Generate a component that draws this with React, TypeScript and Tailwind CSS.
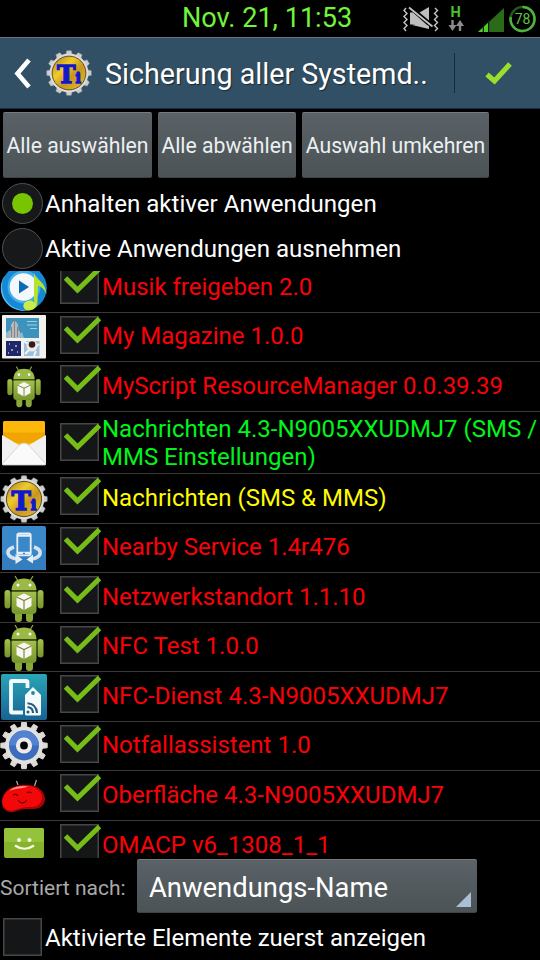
import React, { useState } from 'react'
import clsx from 'clsx'

function gearPath(teeth: number, outer: number, inner: number) {
  const pts: string[] = []
  const step = (Math.PI * 2) / teeth
  for (let i = 0; i < teeth; i++) {
    const a = i * step - Math.PI / 2
    const corners = [
      [-0.3, inner],
      [-0.19, outer],
      [0.19, outer],
      [0.3, inner],
    ]
    corners.forEach(([f, r]) => {
      pts.push(`${(24 + Math.cos(a + f * step) * r).toFixed(2)},${(24 + Math.sin(a + f * step) * r).toFixed(2)}`)
    })
  }
  return pts.join(' ')
}

function TitaniumIcon({ className }: { className?: string }) {
  return (
    <svg viewBox="0 0 48 48" className={clsx('shrink-0', className)}>
      <defs>
        <linearGradient id="gold" x1="0" y1="0" x2="1" y2="1">
          <stop offset="0" stopColor="#a97c14" />
          <stop offset="0.35" stopColor="#f0cb2c" />
          <stop offset="0.6" stopColor="#c9951c" />
          <stop offset="1" stopColor="#e8c53a" />
        </linearGradient>
      </defs>
      <polygon points={gearPath(12, 23.3, 20)} fill="#cdcdcd" stroke="#a8a8a8" strokeWidth="0.6" />
      <circle cx="24" cy="24" r="20" fill="#dcdcdc" />
      <circle cx="24" cy="24" r="17.6" fill="url(#gold)" stroke="#5b4a1c" strokeWidth="1" />
      <text
        x="11.5"
        y="34.500"
        fontSize="26"
        textLength="25"
        lengthAdjust="spacingAndGlyphs"
        fill="#1018cc"
        stroke="#1018cc"
        strokeWidth="1.4"
        fontWeight="bold"
        fontFamily="DejaVu Serif, serif"
      >
        T<tspan fontSize="15">i</tspan>
      </text>
    </svg>
  )
}

function MusicIcon() {
  return (
    <svg viewBox="0 0 48 48" className="size-12">
      <circle cx="24" cy="24" r="22.8" fill="#1689d6" />
      <path d="M5 11A22.8 22.8 0 0 0 28 46.500A24 24 0 0 1 5 11Z" fill="#56bdf0" />
      <circle cx="24" cy="23" r="16.500" fill="#45aee8" />
      <circle cx="23.500" cy="23" r="13.800" fill="#f4f8fa" />
      <path d="M19 16.500L29 23L19 29.500Z" fill="#0a6db4" />
      <path d="M34 9C36 17 45 16 46.500 30C43 23 40 22 38 22L37.500 39C37 44 32 47 27 46.500C22 45 22.500 38.500 28 37C31 36 33 37 34 38Z" fill="#b6e32c" />
      <ellipse cx="29.500" cy="41.500" rx="6" ry="4.600" fill="#c9ec4c" />
    </svg>
  )
}

function MagazineIcon() {
  return (
    <svg viewBox="0 0 48 48" className="size-12">
      <rect x="2" y="2" width="44" height="43.500" rx="1" fill="#f3f1ee" />
      <rect x="6" y="5" width="33" height="20" fill="#3d93bb" />
      <path d="M6 20Q10 15 14 19T22 19L24 25H6Z" fill="#82bdd4" />
      <path d="M9 25V18H10.500L11 12Q14.500 4 18 12L18.500 18H20V25Z" fill="#b9b6b5" />
      <path d="M14.500 5V25M11.500 14V24M17.500 14V24" stroke="#79818c" strokeWidth="0.900" />
      <path d="M27 8.500H37M27 12H37M30 15.500H37" stroke="#9bd2e4" strokeWidth="1.200" />
      <rect x="6" y="28" width="15" height="15" fill="#1f2769" />
      <path d="M9 31h1M15 33h2M11 37h2M17 39h1M8 40h1" stroke="#b5bcf0" strokeWidth="1.300" />
      <rect x="24" y="28" width="15.500" height="15" fill="#9fc0da" />
      <path d="M24 28l5 4M39 31l-4 3M25 41l4-4M34 43l2-5" stroke="#f2f6fa" strokeWidth="2" />
      <circle cx="32" cy="33" r="5.500" fill="#eeeae8" />
      <circle cx="32" cy="31.500" r="3.300" fill="#381a1c" />
    </svg>
  )
}

function AndroidIcon({ small }: { small?: boolean }) {
  return (
    <svg viewBox="0 0 48 48" className="size-12">
      <defs>
        <linearGradient id="droid" x1="0" y1="0" x2="0" y2="1">
          <stop offset="0" stopColor="#a5c14c" />
          <stop offset="1" stopColor="#76952c" />
        </linearGradient>
      </defs>
      <g transform={small ? 'translate(3.500 1.900) scale(0.855 0.880)' : undefined}>
        <path d="M15 2L18 7M33 2L30 7" stroke="#8ba43c" strokeWidth="1.300" />
        <rect x="4.500" y="16" width="6" height="18.500" rx="3" fill="url(#droid)" />
        <rect x="37.500" y="16" width="6" height="18.500" rx="3" fill="url(#droid)" />
        <rect x="15" y="34" width="7" height="14" rx="3.200" fill="#8aa83a" />
        <rect x="26" y="34" width="7" height="14" rx="3.200" fill="#8aa83a" />
        <path d="M11.500 17.500H36.500V36Q36.500 40 32.500 40H15.500Q11.500 40 11.500 36Z" fill="url(#droid)" />
        <path d="M11.500 16C12 8 17 4.500 24 4.500S36 8 36.500 16Z" fill="#9bb945" />
        <path d="M11.500 16.800H36.500" stroke="#465a1c" strokeWidth="1.300" />
        <circle cx="18" cy="11" r="1.500" fill="#fff" />
        <circle cx="30" cy="11" r="1.500" fill="#fff" />
        <path d="M24 19.500L31.500 23V32L24 36L16.500 32V23Z" fill="#f8f8f0" />
        <path d="M16.500 23L24 26.500L31.500 23M24 26.500V36" fill="none" stroke="#7b8b4b" strokeWidth="1.200" />
      </g>
    </svg>
  )
}

function MailIcon() {
  return (
    <svg viewBox="0 0 48 48" className="size-12">
      <rect x="3" y="2" width="42" height="26" rx="1.500" fill="#fdb90b" />
      <path d="M3 13.500H45V24H3Z" fill="#f0a500" />
      <path d="M2 16L24 29L46 16V45Q46 46 45 46H3Q2 46 2 45Z" fill="#f1f1f1" />
      <path d="M2 45L19 26.500Q24 21.500 29 26.500L46 45L45 46H3Z" fill="#fafafa" stroke="#cfcfcf" strokeWidth="0.800" />
    </svg>
  )
}

function NearbyIcon() {
  return (
    <svg viewBox="0 0 48 48" className="size-12">
      <rect x="2" y="2" width="44" height="44" rx="2" fill="#3a87c9" />
      <path d="M2 46V30Q24 36 46 26V46Z" fill="#347dbe" />
      <path d="M14 23C5 26 6 33 17 35M34 23C43 26 42 33 32 35" fill="none" stroke="#d3e3ef" strokeWidth="3.600" />
      <path d="M15.500 30L22.500 35.500L15.500 40ZM33 30.500L26.500 35.500L33 39.500Z" fill="#e4eef5" />
      <rect x="17.300" y="9.300" width="13.400" height="22" rx="1.800" fill="#3a87c9" stroke="#e6eff6" strokeWidth="1.800" />
      <path d="M18 11.500H30M18 29H30" stroke="#e6eff6" strokeWidth="2.600" />
      <path d="M23 29.500H25" stroke="#3a87c9" strokeWidth="1.400" />
    </svg>
  )
}

function NfcIcon() {
  return (
    <svg viewBox="0 0 48 48" className="size-12">
      <defs>
        <linearGradient id="nfc" x1="0" y1="0" x2="0" y2="1">
          <stop offset="0" stopColor="#2aa5b6" />
          <stop offset="1" stopColor="#176394" />
        </linearGradient>
      </defs>
      <rect x="1" y="1" width="46" height="46" rx="2" fill="url(#nfc)" />
      <path d="M27.500 15V9Q27.500 8 26.500 8H12Q11 8 11 9V38.500Q11 39.500 12 39.500H23" fill="none" stroke="#f3fafb" strokeWidth="3.800" />
      <path d="M33 14L41 22V41Q41 42.500 39.500 42.500H26.500Q25 42.500 25 41V22Z" fill="#f3fafb" />
      <circle cx="33" cy="20" r="1.900" fill="#23899f" />
      <circle cx="28" cy="39" r="1.500" fill="#235b7c" />
      <path d="M27.500 34Q33 34.500 33 40M27.500 30.200Q36.500 31 37 40" fill="none" stroke="#235b7c" strokeWidth="2.100" />
    </svg>
  )
}

function GearIcon() {
  return (
    <svg viewBox="0 0 48 48" className="size-12">
      <g transform="translate(0 -0.500)">
        <polygon points={gearPath(12, 23.3, 18)} fill="#dcdad8" stroke="#dcdad8" strokeWidth="1" strokeLinejoin="round" />
        <circle cx="24" cy="24" r="19" fill="#e3e1df" />
        <circle cx="24" cy="24" r="15" fill="#3d6cbc" />
        <path d="M9 24A15 15 0 0 1 39 24Z" fill="#5282d0" />
        <circle cx="24" cy="24" r="6" fill="#050608" stroke="#edebea" strokeWidth="4.200" />
      </g>
    </svg>
  )
}

function BeanIcon() {
  return (
    <svg viewBox="0 0 48 48" className="size-12">
      <path d="M18 13L16.500 9M34.500 14L36.500 8" stroke="#c9a0a0" strokeWidth="1.200" />
      <path d="M2 32C1 20 11 13 25 13C37 12 45 19 45 27C45 34 39 37 33 37C26 37 22 37 17 39C10 42 3 39 2 32Z" fill="#a80305" />
      <path d="M2.500 31C2 21 11 13.500 24 13.500C35 13 42 19 42 26C41 33 36 35 31 35C24 35 20 36 15 38C9 40 3 37 2.500 31Z" fill="#f20808" />
      <path d="M9 19C13 14.500 21 13.500 28 14.500C23 17 14 16 9 19Z" fill="#ff9a90" />
      <path d="M13 23Q16 21 18 24M27 21Q29 19 31.500 21M18 28Q22 34 27 28" fill="none" stroke="#5a0000" strokeWidth="1.100" />
    </svg>
  )
}

function MessageIcon() {
  return (
    <svg viewBox="0 0 48 48" className="size-12">
      <path d="M6 6H42Q44 6 44 8V34Q44 36 42 36H24L21 40L18 36H6Q4 36 4 34V8Q4 6 6 6Z" fill="#86b32b" />
      <path d="M6 6H42Q44 6 44 8V20H4V8Q4 6 6 6Z" fill="#94c23b" />
      <circle cx="19" cy="18" r="2" fill="#f4f8e4" />
      <circle cx="29.500" cy="18" r="2" fill="#f4f8e4" />
      <path d="M15 23.500Q24.500 30 34 23.500" fill="none" stroke="#f4f8e4" strokeWidth="2.200" />
    </svg>
  )
}

type Row = {
  name: string
  icon: React.ReactNode
  height: string
  color: string
}

const RED = 'text-[#fc0008]'

const rows: Row[] = [
  { name: 'Musik freigeben 2.0', icon: <MusicIcon />, height: 'h-[50px]', color: RED },
  { name: 'My Magazine 1.0.0', icon: <MagazineIcon />, height: 'h-[49px]', color: RED },
  { name: 'MyScript ResourceManager 0.0.39.39', icon: <AndroidIcon small />, height: 'h-[50px]', color: RED },
  { name: 'Nachrichten 4.3-N9005XXUDMJ7 (SMS / MMS Einstellungen)', icon: <MailIcon />, height: 'h-[62px]', color: 'text-[#00f51c]' },
  { name: 'Nachrichten (SMS & MMS)', icon: <TitaniumIcon className="size-12" />, height: 'h-[50px]', color: 'text-[#fffb00]' },
  { name: 'Nearby Service 1.4r476', icon: <NearbyIcon />, height: 'h-[49px]', color: RED },
  { name: 'Netzwerkstandort 1.1.10', icon: <AndroidIcon />, height: 'h-[50px]', color: RED },
  { name: 'NFC Test 1.0.0', icon: <AndroidIcon />, height: 'h-[49px]', color: RED },
  { name: 'NFC-Dienst 4.3-N9005XXUDMJ7', icon: <NfcIcon />, height: 'h-[50px]', color: RED },
  { name: 'Notfallassistent 1.0', icon: <GearIcon />, height: 'h-[49px]', color: RED },
  { name: 'Oberfläche 4.3-N9005XXUDMJ7', icon: <BeanIcon />, height: 'h-[50px]', color: RED },
  { name: 'OMACP v6_1308_1_1', icon: <MessageIcon />, height: 'h-[50px]', color: RED },
]

function StatusBar() {
  return (
    <div className="h-[37px] flex items-start pl-[182px] shrink-0">
      <span className="w-[221px] text-[27.100px] leading-[37px] text-[#72f43c] whitespace-nowrap">Nov. 21, 11:53</span>
      <svg viewBox="403 0 137 37" className="w-[137px] h-[37px]">
        {/* vibrate / muted speaker */}
        <path d="M406 8l-2 2.500 3 3-3 3 3 3-3 3 3 3-3 3 2 2.500M435 8l2.500 2.500-3 3 3 3-3 3 3 3-3 3 3 3-2.500 2.500" fill="none" stroke="#c4c4c4" strokeWidth="1.400" />
        <path d="M410 12.500H413L426.500 24.500H410ZM419.500 12.500L429 7V20.500Z" fill="#bdbdbd" />
        <path d="M409 7.500L432.500 26.500" stroke="#c4c4c4" strokeWidth="1.800" />
        <path d="M412 25L429 29V26L422 22Z" fill="#bdbdbd" />
        <text x="450.500" y="17" fontSize="14.500" fontWeight="bold" fontFamily="Roboto, sans-serif" fill="#4ec22b">H</text>
        <path d="M452.500 20V26M460 31V24" stroke="#8b8b8b" strokeWidth="2.400" />
        <path d="M448.500 25H456.500L452.500 31ZM456 26H464L460 20Z" fill="#8b8b8b" />
        {/* signal strength */}
        <path d="M504 8V32H478Z" fill="#2b6a19" />
        <path d="M488 22.800V32H478Z" fill="#4fc92b" />
        <path d="M483.300 24V32M488.600 20V32" stroke="#0c1e07" strokeWidth="1.200" />
        <circle cx="522.500" cy="19" r="12" fill="none" stroke="#24551a" strokeWidth="2.500" />
        <path d="M522.500 7A12 12 0 1 1 510.700 17" fill="none" stroke="#4fb53a" strokeWidth="2.500" />
        <text x="522.500" y="24" fontSize="14" textAnchor="middle" fontFamily="Roboto, sans-serif" fill="#5cc73f">78</text>
      </svg>
    </div>
  )
}

function TitleBar() {
  return (
    <header className="h-[72px] shrink-0 flex items-center bg-[#325065] border-t border-t-[#627684] border-b border-b-[#1b2d3a]">
      <svg viewBox="0 0 46 70" className="w-[46px] h-[70px]">
        <path d="M29 22L17.500 35.500L29 49" fill="none" stroke="#fff" strokeWidth="4.600" />
      </svg>
      <TitaniumIcon className="size-[46px]" />
      <h1 className="w-[362px] pl-[13px] pt-[2px] text-[28.700px] leading-[70px] text-white whitespace-nowrap [text-shadow:1px_1px_1px_rgba(0,0,0,0.5)]">Sicherung aller Systemd..</h1>
      <div className="w-px h-10 bg-[#172c3a]"></div>
      <svg viewBox="455 0 85 70" className="w-[85px] h-[70px]">
        <path d="M487 36.500L494.500 43L510 26" fill="none" stroke="#9ae02b" strokeWidth="5" />
      </svg>
    </header>
  )
}

function CheckBox({ checked }: { checked: boolean }) {
  return (
    <svg viewBox="0 0 42 38" className="w-[42px] h-[38px] shrink-0">
      <rect x="0.750" y="0.750" width="37.500" height="36.500" fill="#151617" stroke="#464646" strokeWidth="1.500" />
      {checked && <path d="M5.500 12L17.500 24L39.500 2.500" fill="none" stroke="#77bd18" strokeWidth="5" />}
    </svg>
  )
}

function Radio({ on }: { on: boolean }) {
  return (
    <span className="size-[41px] rounded-full border border-[#505152] bg-[#16181a] flex items-center justify-center shrink-0">
      {on && <span className="size-[21px] rounded-full bg-[#78c400]"></span>}
    </span>
  )
}

const grey = 'bg-linear-to-b from-[#5a6267] to-[#4b5357] border-t border-t-[#747b80] border-b border-b-[#3c4347] rounded-[2px]'

function App() {
  const [mode, setMode] = useState(0)

  return (
    <div className="w-[540px] h-[960px] bg-black overflow-hidden flex flex-col font-[Roboto,sans-serif] text-white">
      <StatusBar />
      <TitleBar />

      <div className="flex gap-[6px] pl-[3px] pt-[3px] h-[74px] shrink-0 text-[21.200px] text-[#eceff0]">
        <button className={clsx(grey, 'w-[149px] h-[66px] pt-[2px] whitespace-nowrap')}>Alle auswählen</button>
        <button className={clsx(grey, 'w-[138px] h-[66px] pt-[2px] whitespace-nowrap')}>Alle abwählen</button>
        <button className={clsx(grey, 'w-[187px] h-[66px] pt-[2px] whitespace-nowrap')}>Auswahl umkehren</button>
      </div>

      <div className="h-[88px] shrink-0 flex flex-col gap-1 pl-[2px] text-[24.100px]">
        {['Anhalten aktiver Anwendungen', 'Aktive Anwendungen ausnehmen'].map((label, i) => (
          <div key={label} className="flex items-center gap-[2px] h-[41px]" onClick={() => setMode(i)}>
            <Radio on={mode === i} />
            <span className="whitespace-nowrap pt-[2px]">{label}</span>
          </div>
        ))}
      </div>

      {/* list is scrolled, first and last rows are cut */}
      <div className="h-[587px] shrink-0 overflow-hidden flex flex-col justify-start">
        <div className="-mt-[8px]">
          {rows.map((row) => (
            <div key={row.name} className={clsx('flex border-b border-[#3a3a3a]', row.height)}>
              <div className="w-[60px] flex items-center shrink-0">{row.icon}</div>
              <div className={clsx('w-[42px] shrink-0', row.height === 'h-[62px]' ? 'pt-[11px]' : 'pt-[3px]')}>
                <CheckBox checked />
              </div>
              <div className={clsx('flex-1 flex items-center text-[24px] leading-[28px]', row.height === 'h-[62px]' ? 'pt-px' : 'pb-[2px]', row.color)}>
                <span className="w-[440px] shrink-0">{row.name}</span>
              </div>
            </div>
          ))}
        </div>
      </div>

      <div className="flex items-center h-[56px] shrink-0">
        <span className="w-[137px] text-[21px] text-[#a9a9a9] whitespace-nowrap pt-[6px]">Sortiert nach:</span>
        <div className={clsx(grey, 'w-[340px] h-[54px] flex items-end justify-between pl-3 pr-[6px] pb-[5px]')}>
          <span className="text-[27.400px] leading-[38px] whitespace-nowrap">Anwendungs-Name</span>
          <svg viewBox="0 0 15 15" className="size-[15px]">
            <path d="M15 0V15H0Z" fill="#a9bfd4" />
          </svg>
        </div>
      </div>

      <div className="flex items-center h-[46px] pl-[3px] text-[24px] whitespace-nowrap">
        <CheckBox checked={false} />
        <span className="pt-[2px]">Aktivierte Elemente zuerst anzeigen</span>
      </div>
    </div>
  )
}

export default App
